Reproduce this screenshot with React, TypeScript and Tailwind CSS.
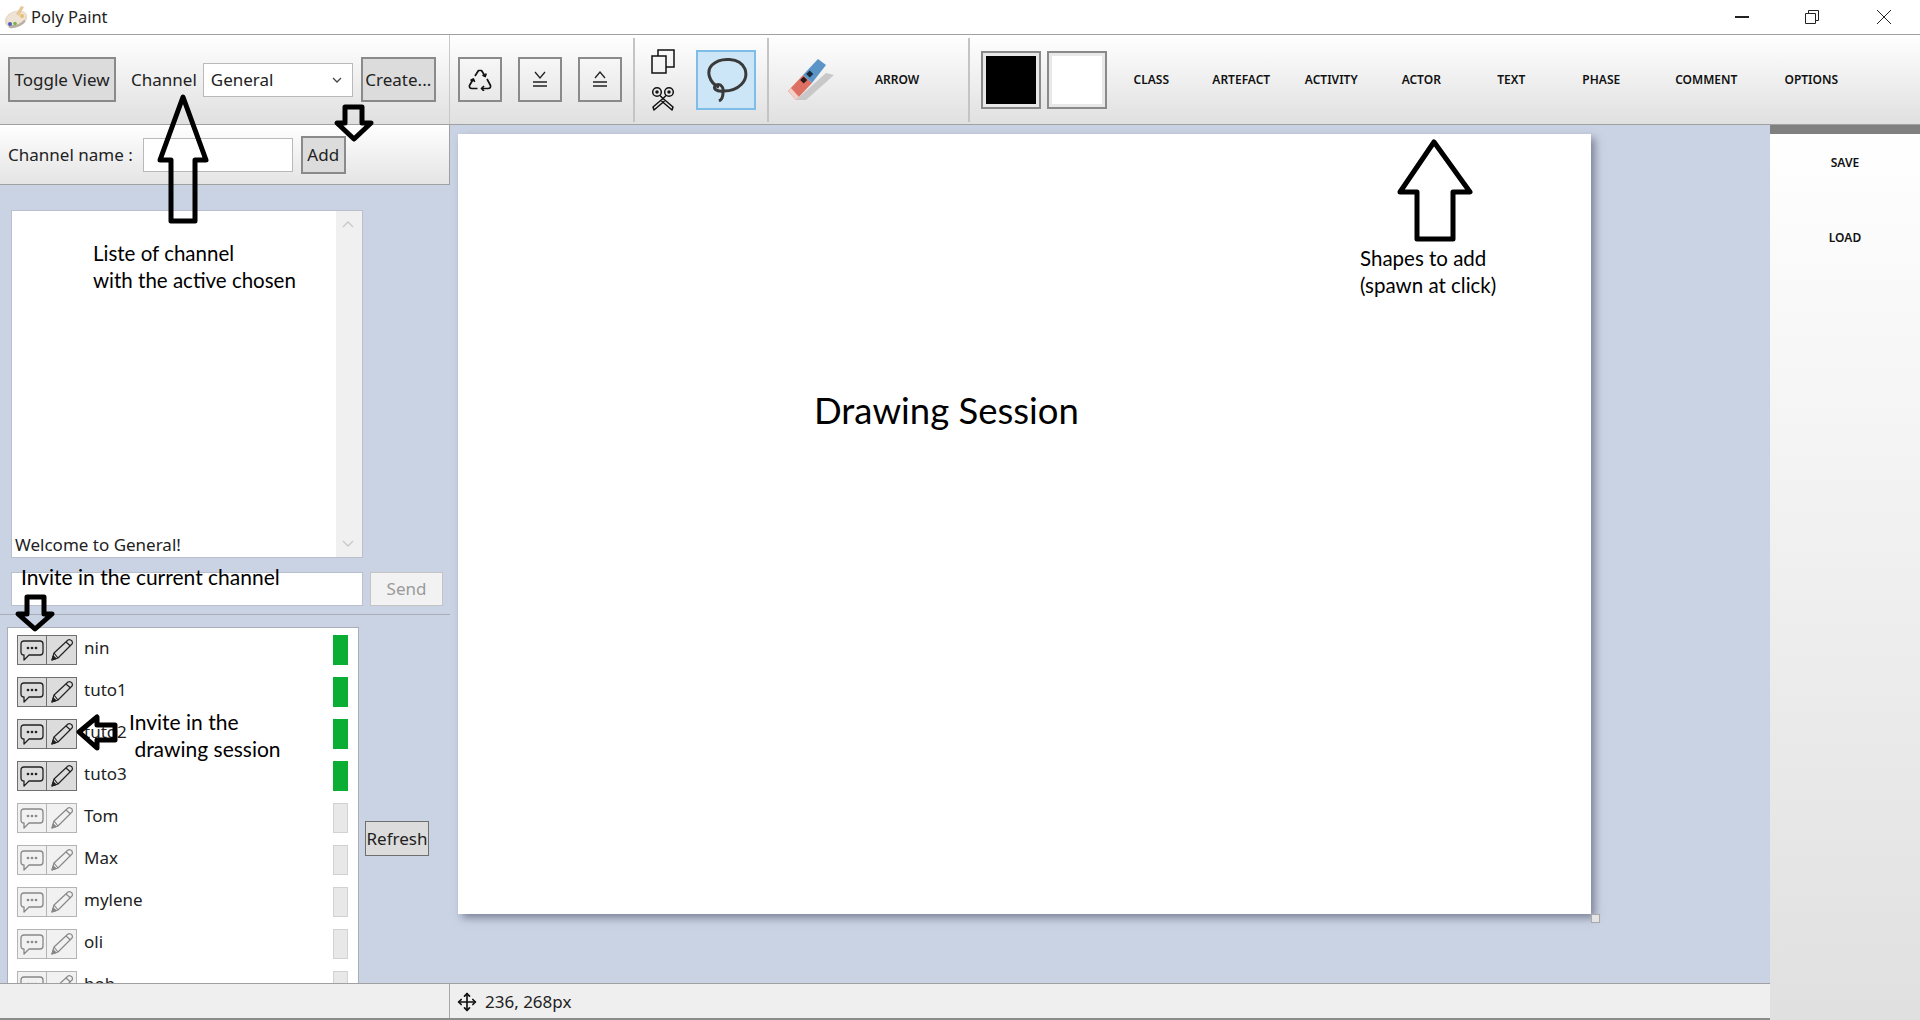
import React from 'react'
import { Move } from 'lucide-react'

const users = [
  { name: 'nin', online: true },
  { name: 'tuto1', online: true },
  { name: 'tuto2', online: true },
  { name: 'tuto3', online: true },
  { name: 'Tom', online: false },
  { name: 'Max', online: false },
  { name: 'mylene', online: false },
  { name: 'oli', online: false },
  { name: 'bob', online: false },
]

const shapes = [
  { label: 'CLASS', width: 'w-[90px]' },
  { label: 'ARTEFACT', width: 'w-[90px]' },
  { label: 'ACTIVITY', width: 'w-[90px]' },
  { label: 'ACTOR', width: 'w-[90px]' },
  { label: 'TEXT', width: 'w-[90px]' },
  { label: 'PHASE', width: 'w-[90px]' },
  { label: 'COMMENT', width: 'w-[120px]' },
  { label: 'OPTIONS', width: 'w-[90px]' },
]

const sans = { fontFamily: '"Noto Sans", sans-serif' }

function ToolSeparator({ className }: { className: string }) {
  return <div className={`h-[84px] w-[2px] bg-[#c4c4c4] ${className}`} />
}

function LayerIcon({ up }: { up: boolean }) {
  return (
    <svg width="14" height="18" viewBox="0 0 14 18" fill="none" stroke="#222" strokeWidth="1.3">
      <path d={up ? 'M2 7 L7 1 L12 7' : 'M2 1 L7 7 L12 1'} />
      <path d="M0 11 H14 M0 15 H14" />
    </svg>
  )
}

function RecycleIcon() {
  return (
    <svg width="24" height="22" viewBox="0 0 24 22" fill="none" stroke="#111" strokeWidth="1.7" strokeLinejoin="round">
      <path d="M7 7 L10.500 1.500 H13.500 L17 7" />
      <path d="M14.500 6 L17.200 7.500 L18.200 4.500" />
      <path d="M19 10 L22.500 16.500 Q23 19.500 20 19.500 H14" />
      <path d="M16 17 L13.500 19.500 L16 22" />
      <path d="M9.500 19.500 H4 Q1 19.500 1.500 16.500 L5 10.500" />
      <path d="M2.500 11.500 L5.300 10 L6.700 12.800" />
    </svg>
  )
}

function ScissorsIcon() {
  return (
    <svg width="24" height="25" viewBox="0 0 24 25" fill="none" stroke="#111" strokeWidth="1.5" strokeLinejoin="round">
      <circle cx="6" cy="6" r="4.300" />
      <circle cx="18" cy="6" r="4.300" />
      <circle cx="6" cy="6" r="1" fill="#111" />
      <circle cx="18" cy="6" r="1" fill="#111" />
      <path d="M9 9.500 L12 12.500 L15 9.500" />
      <path d="M12 12.500 L2 21 L3 24 L13.500 15" />
      <path d="M12 12.500 L22 21 L21 24 L10.500 15" />
    </svg>
  )
}

function ChatIcon({ color }: { color: string }) {
  return (
    <svg width="24" height="22" viewBox="0 0 24 22" fill="none" stroke={color} strokeWidth="1.300" strokeLinejoin="round">
      <path d="M4 2 H20 Q23 2 23 5 V13 Q23 16 20 16 H9 L4 21 V16 Q1 16 1 13 V5 Q1 2 4 2 Z" />
      <circle cx="8" cy="9" r="0.700" fill={color} />
      <circle cx="12" cy="9" r="0.700" fill={color} />
      <circle cx="16" cy="9" r="0.700" fill={color} />
    </svg>
  )
}

function PencilIcon({ color }: { color: string }) {
  return (
    <svg width="24" height="24" viewBox="0 0 24 24" fill="none" stroke={color} strokeWidth="1.200" strokeLinejoin="round">
      <path d="M2 22 L4 15 L18 2 Q20 1 22 3 Q23 5 22 6 L8 20 Z" />
      <path d="M4 15 L8 20 M16 4 L20.500 8" />
      <path d="M2 22 L3.200 18 L6 20.600 Z" fill={color} />
    </svg>
  )
}

function IconButton({ children }: { children: React.ReactNode }) {
  return (
    <div className="flex h-[45px] w-[44px] items-center justify-center border-2 border-[#8a8a8a]">
      {children}
    </div>
  )
}

function Arrow({ d, className, width, height }: { d: string; className: string; width: number; height: number }) {
  return (
    <svg
      width={width}
      height={height}
      viewBox={`0 0 ${width} ${height}`}
      fill="none"
      stroke="black"
      strokeWidth="5"
      strokeLinejoin="round"
      className={`pointer-events-none absolute ${className}`}
    >
      <path d={d} />
    </svg>
  )
}

function Note({ className, children }: { className: string; children: React.ReactNode }) {
  return (
    <div
      className={`pointer-events-none absolute leading-[27px] whitespace-pre text-black ${className}`}
      style={{ fontFamily: 'Lato, sans-serif' }}
    >
      {children}
    </div>
  )
}

function UserRow({ name, online }: { name: string; online: boolean }) {
  const tone = online ? 'border-[#6f6f6f] bg-[#dcdcdc]' : 'border-[#b4b4b4] bg-[#f1f1f1]'
  const stroke = online ? '#222' : '#888'
  return (
    <div className="flex h-[30px] items-center">
      <div className={`flex h-[30px] w-[30px] items-center justify-center border ${tone}`}>
        <ChatIcon color={stroke} />
      </div>
      <div className={`flex h-[30px] w-[30px] items-center justify-center border border-l-0 ${tone}`}>
        <PencilIcon color={stroke} />
      </div>
      <span className="-mt-[5px] ml-[7px] flex-1 text-[17px] text-[#222]">{name}</span>
      <div className={`mr-[10px] h-[30px] w-[15px] ${online ? 'bg-[#0bae35]' : 'border border-[#d2d2d2] bg-[#e8e8e8]'}`} />
    </div>
  )
}

export default function App() {
  return (
    <div className="relative flex h-[1020px] w-[1920px] flex-col overflow-hidden bg-white" style={sans}>
      {/* Title bar */}
      <div className="flex h-[35px] shrink-0 items-center border-b border-[#a0a0a0] bg-white">
        <svg width="26" height="26" viewBox="0 0 26 26" className="ml-[3px]">
          <ellipse cx="13" cy="15" rx="11.500" ry="8" fill="#e6d6c6" transform="rotate(-22 13 15)" />
          <ellipse cx="14" cy="20" rx="9" ry="3" fill="#b9b0a6" transform="rotate(-22 14 20)" />
          <ellipse cx="13" cy="14" rx="10" ry="6.500" fill="#efe3d6" transform="rotate(-22 13 14)" />
          <circle cx="7" cy="20" r="2" fill="#4a5fb5" />
          <circle cx="12" cy="19.500" r="1.800" fill="#7db04a" />
          <circle cx="19" cy="12" r="2" fill="#e2c16c" />
          <path d="M13 10 L18 2 L21 3 L16 12 Z" fill="#e8c79a" />
        </svg>
        <span className="ml-[2px] text-[16.500px] text-[#222]">Poly Paint</span>
        <div className="ml-auto flex items-center">
          <div className="h-[1.500px] w-[14px] bg-[#222]" />
          <svg width="16" height="16" viewBox="0 0 16 16" fill="none" stroke="#222" className="ml-[55px]">
            <path d="M1.500 4.500 H11.500 V14.500 H1.500 Z M4.500 4.500 V1.500 H14.500 V11.500 H11.500" />
          </svg>
          <svg width="16" height="16" viewBox="0 0 16 16" fill="none" stroke="#222" className="mr-[28px] ml-[56px]">
            <path d="M1 1 L15 15 M15 1 L1 15" />
          </svg>
        </div>
      </div>

      {/* Toolbar */}
      <div className="flex h-[90px] shrink-0 items-center border-b border-[#a0a0a0] bg-gradient-to-b from-white to-[#e0e0e0]">
        <div className="flex h-full w-[450px] shrink-0 items-center border-r border-[#c8c8c8] pl-[8px]">
          <div className="flex h-[45px] w-[108px] items-center justify-center border-2 border-[#8a8a8a] bg-[#dcdcdc] text-[17px] whitespace-nowrap text-[#222]">
            Toggle View
          </div>
          <span className="ml-[15px] text-[17px] text-[#222]">Channel</span>
          <div className="ml-[6px] flex h-[34px] w-[150px] items-center justify-between border border-[#b9b9b9] bg-white pr-[10px] pl-[7px] text-[17px] text-[#222]">
            General
            <svg width="10" height="6" viewBox="0 0 10 6" fill="none" stroke="#444" strokeWidth="1.300">
              <path d="M1 1 L5 5 L9 1" />
            </svg>
          </div>
          <div className="ml-[8px] flex h-[45px] w-[75px] items-center justify-center border-2 border-[#8a8a8a] bg-[#dcdcdc] text-[17px] text-[#222]">
            Create...
          </div>
        </div>

        <div className="ml-[8px] flex gap-[16px]">
          <IconButton>
            <RecycleIcon />
          </IconButton>
          <IconButton>
            <LayerIcon up={false} />
          </IconButton>
          <IconButton>
            <LayerIcon up={true} />
          </IconButton>
        </div>
        <ToolSeparator className="ml-[11px]" />

        <div className="ml-[16px] flex flex-col items-center gap-[12px]">
          <svg width="24" height="25" viewBox="0 0 24 25" fill="none" stroke="#111" strokeWidth="1.500">
            <path d="M1 7 H15 V24 H1 Z M7 7 V1 H23 V18 H15" />
          </svg>
          <ScissorsIcon />
        </div>
        <div className="ml-[21px] flex h-[60px] w-[60px] items-center justify-center border-2 border-[#7ebde8] bg-[#cde6f7]">
          <svg width="44" height="46" viewBox="0 0 44 46" fill="none" stroke="#3a3a3a" strokeWidth="3">
            <path d="M15 30 C5 26 2 14 8 8 C16 0 36 0 41 12 C45 24 34 34 20 34 C12 35 8 31 12 28 C18 26 20 32 19 36 C19 40 17 43 15 44" />
          </svg>
        </div>
        <ToolSeparator className="ml-[11px]" />

        <svg width="46" height="43" viewBox="0 0 46 43" className="ml-[19px]">
          <path d="M38 15 L46 17 L18 42 L8 42 Z" fill="#c8c8c8" />
          <path d="M0 33 L15 17 L24 25 L8 42 Z" fill="#dd6f63" />
          <path d="M0 33 L3 30 L11 39 L8 42 Z" fill="#f0d0c8" />
          <path d="M15 17 L30 1 L38 7 L24 25 Z" fill="#5b94c6" />
          <rect x="13" y="20" width="5" height="5" fill="#2a1a1a" transform="rotate(-45 15 22)" />
          <rect x="19" y="14" width="5" height="5" fill="#1a2a3a" transform="rotate(-45 21 16)" />
        </svg>
        <span className="ml-[41px] text-[12px] font-semibold text-[#111]">ARROW</span>
        <ToolSeparator className="ml-[49px]" />

        <div className="ml-[11px] flex h-[58px] w-[60px] items-center justify-center border-2 border-[#8a8a8a] bg-[#e8e8e8] p-[3px]">
          <div className="h-full w-full bg-black" />
        </div>
        <div className="ml-[6px] flex h-[58px] w-[60px] items-center justify-center border-2 border-[#8a8a8a] bg-[#e8e8e8] p-[3px]">
          <div className="h-full w-full bg-white" />
        </div>
        <div className="ml-[-1px] flex">
          {shapes.map((shape) => (
            <span key={shape.label} className={`${shape.width} text-center text-[12px] font-semibold text-[#111]`}>
              {shape.label}
            </span>
          ))}
        </div>
      </div>

      <div className="flex min-h-0 flex-1">
        <div className="flex w-[1770px] shrink-0 flex-col">
          <div className="flex min-h-0 flex-1 bg-[#cad3e4]">
            {/* Chat and users */}
            <div className="flex w-[450px] shrink-0 flex-col">
              <div className="flex h-[60px] shrink-0 items-center border-r border-b border-[#a0a0a0] bg-gradient-to-b from-white to-[#e4e4e4] pl-[8px]">
                <span className="text-[17px] text-[#222]">Channel name :</span>
                <div className="ml-[10px] h-[34px] w-[150px] border border-[#b9b9b9] bg-white" />
                <div className="ml-[8px] flex h-[38px] w-[45px] items-center justify-center border-2 border-[#8a8a8a] bg-[#dcdcdc] text-[17px] text-[#222]">
                  Add
                </div>
              </div>
              <div className="mt-[25px] ml-[11px] flex h-[348px] w-[352px] border border-[#b9bfcc] bg-white">
                <div className="flex flex-1 items-end pl-[3px] text-[17px] leading-[24px] text-[#222]">Welcome to General!</div>
                <div className="flex w-[26px] flex-col items-center justify-between bg-[#f0f0f0] py-[10px] pr-[2px]">
                  <svg width="12" height="7" viewBox="0 0 12 7" fill="none" stroke="#c8c8c8" strokeWidth="1.300">
                    <path d="M1 6 L6 1 L11 6" />
                  </svg>
                  <svg width="12" height="7" viewBox="0 0 12 7" fill="none" stroke="#c8c8c8" strokeWidth="1.300">
                    <path d="M1 1 L6 6 L11 1" />
                  </svg>
                </div>
              </div>
              <div className="mt-[14px] ml-[11px] flex">
                <div className="h-[34px] w-[352px] border border-[#b9bfcc] bg-white" />
                <div className="ml-[7px] flex h-[34px] w-[73px] items-center justify-center border border-[#c4c4c4] bg-[#f2f2f2] text-[17px] text-[#9a9a9a]">
                  Send
                </div>
              </div>
              <div className="mt-[8px] h-[1px] w-full bg-[#a8adb8]" />
              <div className="mt-[12px] flex min-h-0 flex-1 items-start">
                <div className="ml-[7px] flex h-full w-[352px] flex-col gap-[12px] overflow-hidden border-x border-t border-[#a9aeb8] bg-white pt-[7px] pl-[9px]">
                  {users.map((user) => (
                    <div key={user.name} className="shrink-0">
                      <UserRow name={user.name} online={user.online} />
                    </div>
                  ))}
                </div>
                <div className="mt-[194px] ml-[6px] flex h-[35px] w-[64px] items-center justify-center border border-[#6f6f6f] bg-[#dcdcdc] text-[17px] text-[#222]">
                  Refresh
                </div>
              </div>
            </div>

            {/* Canvas */}
            <div className="pt-[9px] pl-[8px]">
              <div className="relative h-[780px] w-[1133px] bg-white shadow-[4px_4px_8px_rgba(60,70,90,0.55)]">
                <div className="h-full pt-[251px] pl-[356px] text-[36.500px] leading-[50px] text-black" style={{ fontFamily: 'Lato, sans-serif' }}>
                  Drawing Session
                </div>
                <div className="absolute top-full left-full h-[9px] w-[9px] border border-[#a8a8a8] bg-[#e4e4e4]" />
              </div>
            </div>
          </div>

          {/* Status bar */}
          <div className="flex h-[37px] shrink-0 items-center border-t border-b-2 border-t-[#a0a0a0] border-b-[#8c8c8c] bg-[#efefef]">
            <div className="h-full w-[450px] border-r border-[#a8a8a8]" />
            <Move size={20} strokeWidth={2} color="#111" className="mt-[2px] ml-[7px]" />
            <span className="mt-[2px] ml-[8px] text-[17px] text-[#222]">236, 268px</span>
          </div>
        </div>

        {/* Save and load */}
        <div className="flex w-[150px] shrink-0 flex-col items-center bg-gradient-to-b from-white to-[#e0e0e0]">
          <div className="h-[9px] w-full bg-[#808080]" />
          <span className="mt-[20px] text-[12px] font-semibold text-[#111]">SAVE</span>
          <span className="mt-[57px] text-[12px] font-semibold text-[#111]">LOAD</span>
        </div>
      </div>

      {/* Annotations pasted over the screenshot */}
      <Arrow width={56} height={134} className="top-[93px] left-[155px]" d="M28 4 L51 67 H40 V128 H16 V67 H5 Z" />
      <Arrow width={44} height={44} className="top-[101px] left-[332px]" d="M13 6 H30 V22 H39 L22 38 L5 22 H13 Z" />
      <Arrow width={84} height={110} className="top-[136px] left-[1392px]" d="M42 6 L78 56 H61 V103 H25 V56 H8 Z" />
      <Arrow width={44} height={44} className="top-[591px] left-[13px]" d="M14 6 H31 V23 H39 L22 38 L5 23 H14 Z" />
      <Arrow width={48} height={42} className="top-[711px] left-[73px]" d="M6 21 L24 6 V14 H42 V29 H24 V37 Z" />

      <Note className="top-[240px] left-[93px] text-[20.500px]">{'Liste of channel\nwith the active chosen'}</Note>
      <Note className="top-[245px] left-[1360px] text-[20.500px]">{'Shapes to add\n(spawn at click)'}</Note>
      <Note className="top-[563px] left-[21px] text-[21px]">Invite in the current channel</Note>
      <Note className="top-[708px] left-[129px] text-[21px]">{'Invite in the\n drawing session'}</Note>
    </div>
  )
}
